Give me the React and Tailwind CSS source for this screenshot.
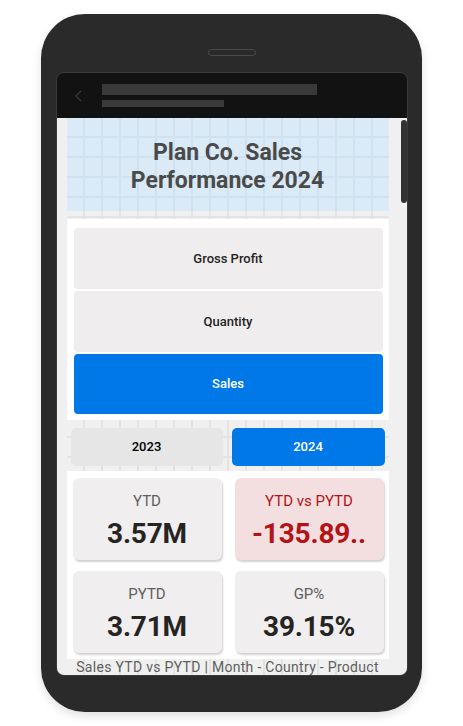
export default function App() {
  const greyGrid =
    "bg-[#f0f0f0] bg-[linear-gradient(to_right,transparent_16px,#e4e4e4_16px),linear-gradient(to_bottom,transparent_18px,#e4e4e4_18px)] bg-[length:18px_20px]";
  const blueGrid =
    "bg-[#dbeaf7] bg-[linear-gradient(to_right,transparent_16px,#d0e1f0_16px),linear-gradient(to_bottom,transparent_18px,#d0e1f0_18px)] bg-[length:18px_20px]";
  const font = { fontFamily: "Roboto, 'Liberation Sans', sans-serif" };

  const Card = ({ label, value, red }) => (
    <div
      className={`h-[82px] w-[149px] rounded-[6px] flex flex-col items-center shadow-[1px_2px_2px_rgba(0,0,0,0.18)] ${
        red ? "bg-[#f3dfdf]" : "bg-[#f0eeef]"
      }`}
    >
      <div
        className={`mt-[13px] text-[15px] leading-[20px] ${
          red ? "text-[#b31217]" : "text-[#605e5c]"
        }`}
      >
        {label}
      </div>
      <div
        className={`mt-[6px] text-[28px] leading-[34px] font-bold tracking-[-0.2px] ${
          red ? "text-[#b31217]" : "text-[#252423]"
        }`}
      >
        {value}
      </div>
    </div>
  );

  return (
    <div className="w-[463px] h-[726px] bg-white overflow-hidden" style={font}>
      <div className="ml-[41px] mt-[14px] w-[381px] h-[698px] rounded-[44px] bg-[#2a2a2a] flex flex-col items-center shadow-[0_4px_10px_rgba(0,0,0,0.12)]">
        <div className="mt-[35px] w-[48px] h-[7px] rounded-full border border-[#4a4a4a]" />
        <div className="mt-[16px] w-[352px] h-[604px] rounded-[8px] overflow-hidden flex flex-col border border-[#3a3a3a]">
          {/* top bar */}
          <div className="h-[45px] bg-[#121212] flex items-center shrink-0">
            <svg width="8" height="12" viewBox="0 0 8 12" className="ml-[18px]">
              <polyline points="6,1 1,6 6,11" fill="none" stroke="#3d3d3d" strokeWidth="1.2" />
            </svg>
            <div className="ml-[19px] flex flex-col gap-[5px]">
              <div className="w-[215px] h-[11px] bg-[#3a3a3a]" />
              <div className="w-[122px] h-[7px] bg-[#3a3a3a]" />
            </div>
          </div>
          {/* content */}
          <div className="flex-1 bg-[#f0f0f0] flex">
            <div className={`ml-[10px] w-[322px] flex flex-col ${greyGrid}`}>
              <div
                className={`h-[93px] shrink-0 pt-[4px] flex items-center justify-center text-center text-[#4a4a4a] text-[23px] leading-[28px] font-bold ${blueGrid}`}
              >
                <div>
                  Plan Co. Sales
                  <br />
                  Performance 2024
                </div>
              </div>
              <div className="h-[8px] shrink-0" />
              <div className="bg-white h-[201px] shrink-0 pl-[7px] pr-[6px] pt-[9px] flex flex-col gap-[2px]">
                <div className="h-[61px] rounded-[4px] bg-[#efedee] flex items-center justify-center text-[13px] font-medium text-[#252423]">
                  Gross Profit
                </div>
                <div className="h-[61px] rounded-[4px] bg-[#efedee] flex items-center justify-center text-[13px] font-medium text-[#252423]">
                  Quantity
                </div>
                <div className="h-[60px] rounded-[4px] bg-[#0078e8] flex items-center justify-center text-[13px] font-medium text-white">
                  Sales
                </div>
              </div>
              <div className="h-[51px] shrink-0 flex pl-[4px] pt-[8px] gap-[9px]">
                <div className="w-[152px] h-[38px] rounded-[5px] bg-[#e6e6e6] flex items-center justify-center text-[13px] font-medium text-black">
                  2023
                </div>
                <div className="w-[153px] h-[38px] rounded-[5px] bg-[#0078e8] flex items-center justify-center text-[13px] font-medium text-white">
                  2024
                </div>
              </div>
              <div className="bg-white h-[188px] shrink-0 pl-[6px] pt-[7px] grid grid-cols-[149px_149px] gap-x-[13px] gap-y-[11px] content-start">
                <Card label="YTD" value="3.57M" />
                <Card label="YTD vs PYTD" value="-135.89.." red />
                <Card label="PYTD" value="3.71M" />
                <Card label="GP%" value="39.15%" />
              </div>
              <div className="flex-1 flex items-center justify-center text-[14px] text-[#605e5c] leading-[16px] tracking-[0.3px]">
                Sales YTD vs PYTD | Month - Country - Product
              </div>
            </div>
            <div className="ml-[12px] mt-[2px] w-[6px] h-[83px] rounded-full bg-[#333333]" />
          </div>
        </div>
      </div>
    </div>
  );
}
